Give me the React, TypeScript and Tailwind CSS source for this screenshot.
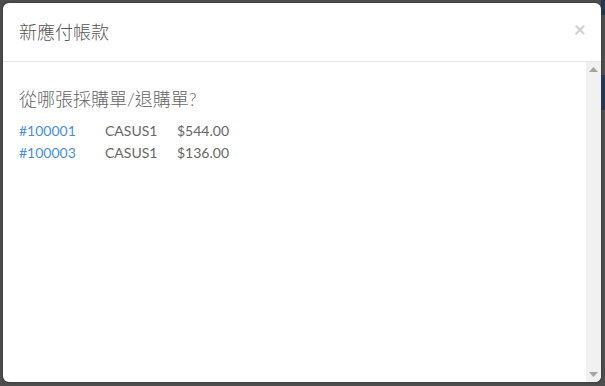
import React from "react";

const rows = [
  { id: "#100001", vendor: "CASUS1", amount: "$544.00" },
  { id: "#100003", vendor: "CASUS1", amount: "$136.00" },
];

export default function App() {
  return (
    <div
      className="w-[605px] h-[386px] flex bg-[#4e4e4e] overflow-hidden"
      style={{ fontFamily: '"Lato", "Noto Sans CJK TC", sans-serif' }}
    >
      <div className="w-[3px] shrink-0" />
      <div className="flex flex-col shrink-0">
        <div className="h-[3px]" />
        <div className="w-[598px] h-[379px] bg-white rounded-[6px] overflow-hidden flex flex-col shadow-[0_0_3px_rgba(0,0,0,0.4)]">
          <div className="h-[59px] shrink-0 flex items-center justify-between pl-[16px] pr-[15px] border-b border-[#e5e5e5]">
            <h4 className="text-[18px] leading-[26px] text-[#555] font-light">新應付帳款</h4>
            <span className="text-[21px] leading-none font-bold text-[#d0d0d0] -mt-[8px]">×</span>
          </div>
          <div className="flex flex-1 min-h-0">
            <div className="flex-1 pl-[16px] pt-[24px]">
              <div className="text-[18px] leading-[26px] text-[#666] font-light">從哪張採購單/退購單?</div>
              <div className="mt-[8px] text-[14px] leading-[22px]">
                {rows.map((r) => (
                  <div key={r.id} className="flex">
                    <span className="w-[86px] text-[#4a8fd6]">{r.id}</span>
                    <span className="w-[72px] text-[#666]">{r.vendor}</span>
                    <span className="text-[#666]">{r.amount}</span>
                  </div>
                ))}
              </div>
            </div>
            <div className="w-[15px] shrink-0 bg-[#f1f1f1] flex flex-col justify-between items-center py-[5px]">
              <svg width="9" height="5" viewBox="0 0 9 5">
                <polygon points="4.5,0 9,5 0,5" fill="#a3a3a3" />
              </svg>
              <svg width="9" height="5" viewBox="0 0 9 5">
                <polygon points="0,0 9,0 4.5,5" fill="#a3a3a3" />
              </svg>
            </div>
          </div>
        </div>
      </div>
      <div className="flex-1 flex flex-col">
        <div className="h-[15px] bg-[#26364e]" />
        <div className="h-[60px]" />
        <div className="h-[35px] bg-[#26364e]" />
      </div>
    </div>
  );
}
